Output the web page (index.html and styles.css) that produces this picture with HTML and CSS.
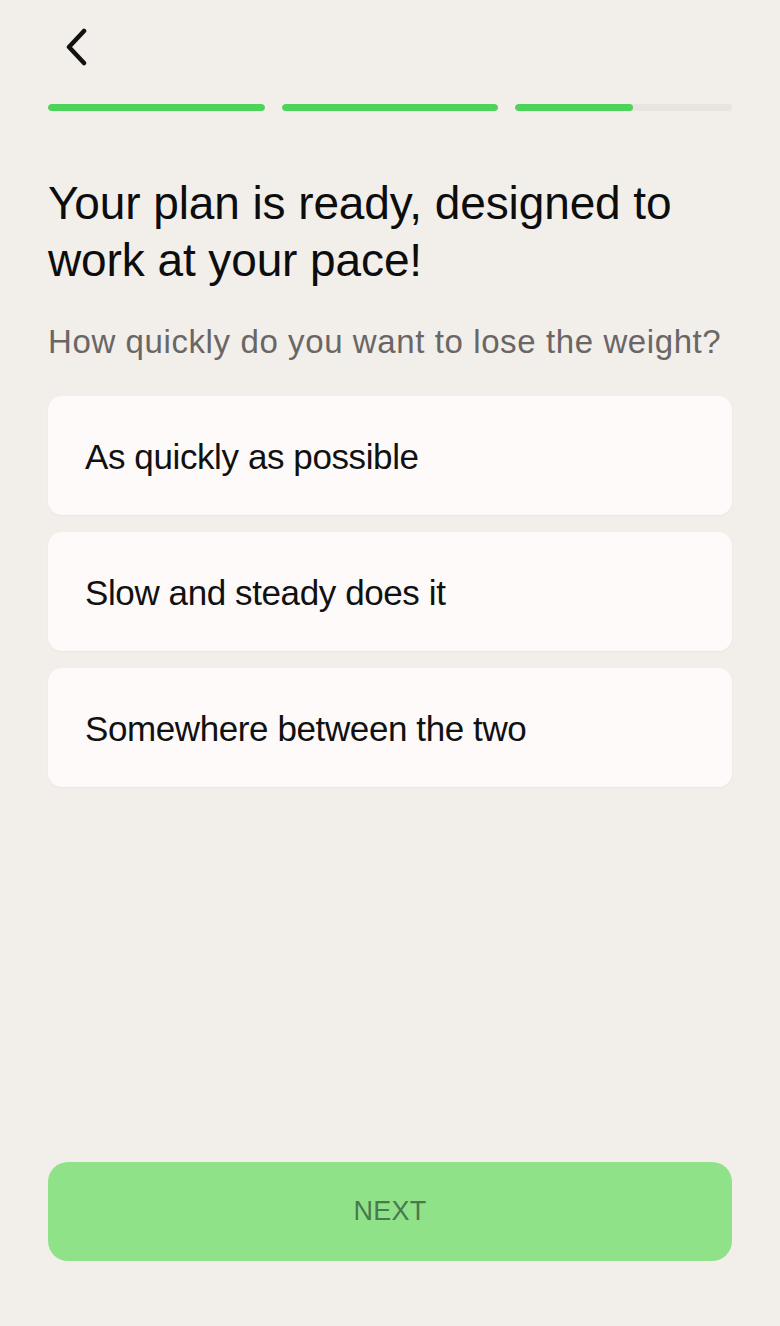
FILE: index.html
```html
<!DOCTYPE html>
<html lang="en">
<head>
<meta charset="utf-8">
<link rel="stylesheet" href="styles.css">
</head>
<body>
<div class="screen">
  <header class="top">
    <button class="back" aria-label="Back">
      <svg width="24" height="38" viewBox="0 0 24 38"><path d="M20 3 L5 19 L20 35" fill="none" stroke="#111" stroke-width="4.5" stroke-linecap="round" stroke-linejoin="round"/></svg>
    </button>
  </header>
  <div class="progress">
    <div class="seg"><div class="fill" style="width:100%"></div></div>
    <div class="seg"><div class="fill" style="width:100%"></div></div>
    <div class="seg"><div class="fill" style="width:54.5%"></div></div>
  </div>
  <h1 class="title">Your plan is ready, designed to work at your pace!</h1>
  <p class="subtitle">How quickly do you want to lose the weight?</p>
  <div class="options">
    <div class="option">As quickly as possible</div>
    <div class="option">Slow and steady does it</div>
    <div class="option">Somewhere between the two</div>
  </div>
  <div class="spacer"></div>
  <button class="next">NEXT</button>
</div>
</body>
</html>
```
FILE: styles.css
```css
* { box-sizing: border-box; }
html, body { margin: 0; padding: 0; }
body {
  background: #f2eeea;
  font-family: "Liberation Sans", Arial, sans-serif;
  color: #111;
}
.screen {
  width: 780px;
  height: 1326px;
  padding: 0 48px 65px;
  display: flex;
  flex-direction: column;
}
.top {
  height: 104px;
  display: flex;
  align-items: flex-start;
  padding-top: 28px;
}
.back {
  background: none;
  border: 0;
  padding: 0;
  margin-left: 16px;
  width: 24px;
  height: 38px;
  display: block;
}
.back svg { display: block; }
.progress {
  display: flex;
  gap: 17px;
  height: 7px;
}
.seg {
  flex: 1;
  background: #e9e4df;
  border-radius: 4px;
  overflow: hidden;
}
.fill {
  height: 100%;
  background: #4cd35a;
  border-radius: 4px;
}
.title {
  margin: 64px 0 0;
  font-size: 46px;
  font-weight: 400;
  line-height: 57px;
  letter-spacing: -0.1px;
  color: #0d0d0d;
  max-width: 650px;
}
.subtitle {
  margin: 33px 0 0;
  font-size: 33px;
  line-height: 40px;
  color: #6a6665;
  letter-spacing: 0.6px;
}
.options {
  margin-top: 34px;
  display: flex;
  flex-direction: column;
  gap: 17px;
}
.option {
  height: 119px;
  background: #fdfaf9;
  border-radius: 14px;
  display: flex;
  align-items: center;
  padding-left: 37px;
  padding-top: 2px;
  font-size: 35px;
  letter-spacing: -0.4px;
  color: #111;
  box-shadow: 0 1px 2px rgba(0,0,0,0.04);
}
.spacer { flex: 1; }
.next {
  height: 99px;
  width: 100%;
  border: 0;
  border-radius: 20px;
  background: #90e289;
  color: #4a7850;
  font-family: "Liberation Sans", Arial, sans-serif;
  font-size: 27px;
  letter-spacing: 0.3px;
}
```
